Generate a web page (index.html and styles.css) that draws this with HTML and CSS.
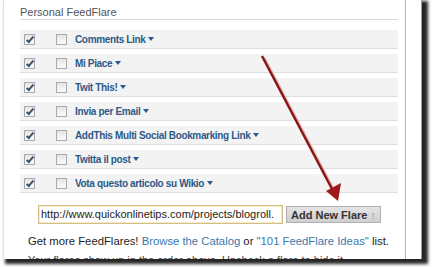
FILE: index.html
```html
<!DOCTYPE html>
<html lang="en">
<head>
    <meta charset="UTF-8">
    <title>Personal FeedFlare</title>
    <link rel="stylesheet" href="styles.css">
</head>
<body>
<div class="shot">
    <div class="panel">
        <h3 class="title">Personal FeedFlare</h3>

        <div class="flares">
            <div class="row"><span class="cb on"></span><span class="cb"></span><a class="flare">Comments Link</a><span class="caret"></span></div>
            <div class="row"><span class="cb on"></span><span class="cb"></span><a class="flare">Mi Piace</a><span class="caret"></span></div>
            <div class="row"><span class="cb on"></span><span class="cb"></span><a class="flare">Twit This!</a><span class="caret"></span></div>
            <div class="row"><span class="cb on"></span><span class="cb"></span><a class="flare">Invia per Email</a><span class="caret"></span></div>
            <div class="row"><span class="cb on"></span><span class="cb"></span><a class="flare">AddThis Multi Social Bookmarking Link</a><span class="caret"></span></div>
            <div class="row"><span class="cb on"></span><span class="cb"></span><a class="flare">Twitta il post</a><span class="caret"></span></div>
            <div class="row"><span class="cb on"></span><span class="cb"></span><a class="flare">Vota questo articolo su Wikio</a><span class="caret"></span></div>
        </div>

        <div class="add">
            <div class="url">http://www.quickonlinetips.com/projects/blogroll.</div>
            <button class="btn">Add New Flare <span class="up">&uarr;</span></button>
        </div>

        <p class="more">Get more FeedFlares! <a>Browse the Catalog</a> or <a>"101 FeedFlare Ideas"</a> list.</p>
        <p class="note">Your flares show up in the order above. Uncheck a flare to hide it.</p>
    </div>
    <div class="gutter"></div>
</div>

<svg class="arrow" width="433" height="267" viewBox="0 0 433 267">
    <line x1="263" y1="57" x2="333" y2="190" stroke="#d9b0b0" stroke-width="3" transform="translate(1,1)"/>
    <line x1="262" y1="56" x2="332" y2="189" stroke="#8a1414" stroke-width="2.4"/>
    <polygon points="338,201 326,191 341,183" fill="#a01818"/>
</svg>
</body>
</html>
```

FILE: styles.css
```css
body {
    margin: 0;
    width: 433px;
    height: 267px;
    overflow: hidden;
    background-color: #fff;
    font-family: "Liberation Sans", Arial, sans-serif;
    position: relative;
}

.shot {
    display: flex;
    margin-left: 3px;
    width: 417px;
    height: 259px;
    border-left: 1px solid #e2e2e2;
    border-right: 1px solid #9a9a9a;
    box-shadow: 4px 3px 3px 2px rgba(0, 0, 0, 0.85);
    overflow: hidden;
    background-color: #fff;
}

.panel {
    width: 378px;
    padding: 0 7px 0 16px;
    border-right: 1px solid #b4b4b4;
}

.gutter {
    flex: 1;
}

.title {
    margin: 0;
    height: 19px;
    line-height: 24px;
    font-size: 11px;
    font-weight: normal;
    color: #555;
    border-bottom: 1px solid #dcdcdc;
}

.flares {
    margin-top: 5px;
}

.row {
    display: flex;
    align-items: center;
    height: 18px;
    padding: 5px 0 0;
    background-color: #f3f3f3;
    background-clip: content-box;
    border-bottom: 1px solid #dedede;
}

.cb {
    width: 9px;
    height: 9px;
    border: 1px solid #a8a8a8;
    background: linear-gradient(#e6e6e6, #fbfbfb);
    margin-left: 4px;
    position: relative;
}

.cb + .cb {
    margin-left: 21px;
}

.cb.on::after {
    content: "";
    position: absolute;
    left: 3px;
    top: 0;
    width: 2px;
    height: 6px;
    border: solid #3c4f76;
    border-width: 0 2px 2px 0;
    transform: rotate(40deg);
}

.flare {
    margin-left: 8px;
    font-size: 10px;
    font-weight: bold;
    color: #2c5a87;
    letter-spacing: -0.35px;
}

.caret {
    margin-left: 3px;
    width: 0;
    height: 0;
    border-left: 3.5px solid transparent;
    border-right: 3.5px solid transparent;
    border-top: 4px solid #2c5a87;
}

.add {
    display: flex;
    align-items: center;
    margin: 12px 0 0 18px;
}

.url {
    width: 239px;
    height: 17px;
    padding: 0 2px;
    line-height: 17px;
    font-size: 11px;
    color: #222;
    border: 1px solid #d4be86;
    box-shadow: inset 0 0 0 1px #f5ebc9;
    white-space: nowrap;
    overflow: hidden;
}

.btn {
    margin-left: 3px;
    height: 17px;
    padding: 0 4px;
    font-family: "Liberation Sans", Arial, sans-serif;
    font-size: 11px;
    font-weight: bold;
    color: #333;
    background: linear-gradient(#e4e4e4, #cfcfcf);
    border: 1px solid #b0b0b0;
    border-radius: 0;
}

.up {
    font-weight: normal;
    color: #999;
}

.more {
    margin: 11px 0 0 8px;
    font-size: 11.3px;
    color: #222;
}

.more a {
    color: #3a78ad;
}

.note {
    margin: 7px 0 0 8px;
    font-size: 11px;
    color: #444;
    white-space: nowrap;
}

.arrow {
    position: absolute;
    left: 0;
    top: 0;
}
```
